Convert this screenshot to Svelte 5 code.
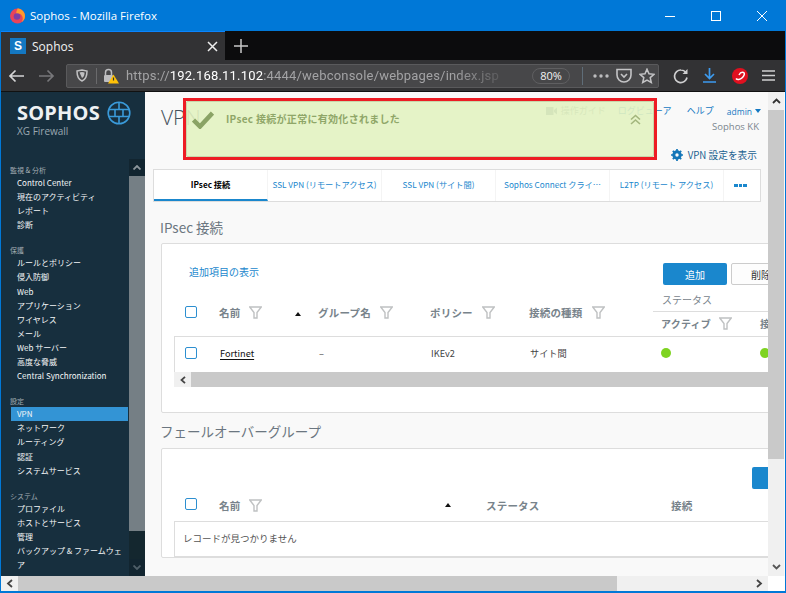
<script>
  const menu = [
    { label: '監視 & 分析', items: ['Control Center', '現在のアクティビティ', 'レポート', '診断'] },
    { label: '保護', items: ['ルールとポリシー', '侵入防御', 'Web', 'アプリケーション', 'ワイヤレス', 'メール', 'Web サーバー', '高度な脅威', 'Central Synchronization'] },
    { label: '設定', items: ['VPN', 'ネットワーク', 'ルーティング', '認証', 'システムサービス'] },
    { label: 'システム', items: ['プロファイル', 'ホストとサービス', '管理', 'バックアップ & ファームウェア'] }
  ];
  const tabs = ['IPsec 接続', 'SSL VPN (リモートアクセス)', 'SSL VPN (サイト間)', 'Sophos Connect クライ…', 'L2TP (リモート アクセス)'];
</script>

{#snippet funnel()}
  <svg class="funnel" width="13" height="13" viewBox="0 0 13 13"><path d="M.7 1h11.6L8 6.500V12H5V6.500z" fill="#fff" stroke="#bfc1c2" stroke-width="1.400"/></svg>
{/snippet}

<div class="window">
  <div class="titlebar">
    <svg class="fx" width="17" height="17" viewBox="0 0 17 17">
      <circle cx="8.500" cy="9" r="7.500" fill="#e8445a"/>
      <path d="M8.500 1.500c3 0 7.500 2.500 7.500 7.500 0 3-1.500 5-3.500 6 1.500-2 2-5-.5-7.500-1-1-3-1-4 0-1-.5-1-1.500-.5-2.500C7 4 8.500 3 8.500 1.500z" fill="#ff9a2e"/>
      <circle cx="8" cy="9.500" r="3.300" fill="#7b3fa8"/>
    </svg>
    <span class="wintitle">Sophos - Mozilla Firefox</span>
    <div class="winbtns">
      <svg width="12" height="12" viewBox="0 0 12 12"><path d="M1 6.500h10" stroke="#fff"/></svg>
      <svg width="12" height="12" viewBox="0 0 12 12"><rect x="1.500" y="1.500" width="9" height="9" fill="none" stroke="#fff"/></svg>
      <svg width="12" height="12" viewBox="0 0 12 12"><path d="M1 1l10 10M11 1L1 11" stroke="#fff"/></svg>
    </div>
  </div>

  <div class="tabbar">
    <div class="tab">
      <span class="favicon">S</span>
      <span class="tabname">Sophos</span>
      <svg width="11" height="11" viewBox="0 0 11 11"><path d="M1 1l9 9M10 1l-9 9" stroke="#eee" stroke-width="1.500"/></svg>
    </div>
    <svg class="newtab" width="14" height="14" viewBox="0 0 14 14"><path d="M7 0v14M0 7h14" stroke="#c8c8c8" stroke-width="1.500"/></svg>
  </div>

  <div class="navbar">
    <svg class="navarrow" width="17" height="14" viewBox="0 0 17 14"><path d="M16 7H2M7.500 1.500L2 7l5.500 5.500" fill="none" stroke="#d4d4d5" stroke-width="1.700"/></svg>
    <svg class="navarrow next" width="17" height="14" viewBox="0 0 17 14"><path d="M1 7h14M9.500 1.500L15 7l-5.500 5.500" fill="none" stroke="#77777a" stroke-width="1.700"/></svg>
    <div class="urlbar">
      <svg width="12" height="13" viewBox="0 0 12 13"><path d="M1 2l5-1 5 1c0 5-1 8.500-5 10C2 10.500 1 7 1 2z" fill="none" stroke="#c0c0c2" stroke-width="1.500"/><path d="M3.500 3.500L6 3l2.500.5C8.500 6 8 8 6 9z" fill="#c0c0c2"/></svg>
      <span class="urlsep"></span>
      <svg class="lock" width="15" height="16" viewBox="0 0 15 16"><path d="M1.500 7V4.500a3 3 0 016 0V7" fill="none" stroke="#bdbdbf" stroke-width="1.500"/><rect x="0" y="7" width="9" height="7" rx="1" fill="#bdbdbf"/><path d="M9.500 6.500L15 15.500H4z" fill="#ffc107"/><path d="M9.500 9.500v3" stroke="#333" stroke-width="1.200"/></svg>
      <span class="url">https://<b>192.168.11.102</b>:4444/webconsole/webpages/index.jsp</span>
      <span class="zoompill">80%</span>
      <span class="urlsep wide"></span>
      <svg width="16" height="4" viewBox="0 0 16 4"><g fill="#bcbcbe"><circle cx="2" cy="2" r="1.700"/><circle cx="8" cy="2" r="1.700"/><circle cx="14" cy="2" r="1.700"/></g></svg>
      <svg width="16" height="15" viewBox="0 0 16 15"><path d="M1 1.500h14V7a7 7 0 01-14 0z" fill="none" stroke="#c4c4c6" stroke-width="1.600"/><path d="M5 6l3 3 3-3" fill="none" stroke="#c4c4c6" stroke-width="1.600"/></svg>
      <svg width="16" height="16" viewBox="0 0 16 16"><path d="M8 1.200l2 4.600 5 .5-3.800 3.300 1.100 4.900L8 12l-4.300 2.500 1.100-4.900L1 6.300l5-.5z" fill="none" stroke="#c4c4c6" stroke-width="1.500"/></svg>
    </div>
    <div class="navicons">
      <svg width="16" height="16" viewBox="0 0 16 16"><path d="M14 9.500A6.300 6.300 0 118 2c2 0 3.500.8 5 2.500" fill="none" stroke="#cfcfd0" stroke-width="1.700"/><path d="M14.500 1v5h-5z" fill="#cfcfd0"/></svg>
      <svg width="13" height="15" viewBox="0 0 13 15"><path d="M6.500 0v10M2 6l4.500 4.500L11 6M0 14h13" fill="none" stroke="#3d9bef" stroke-width="1.700"/></svg>
      <svg width="16" height="16" viewBox="0 0 16 16"><circle cx="8" cy="8" r="8" fill="#e0101f"/><path d="M4 10.500C5 12 8 12 10.500 9.500 12.500 7.500 13 5 11.500 4.500 10 4 8 5 7 7" fill="none" stroke="#fff" stroke-width="1.500"/></svg>
      <svg width="13" height="11" viewBox="0 0 13 11"><path d="M0 1h13M0 5.500h13M0 10h13" stroke="#cfcfd0" stroke-width="1.600"/></svg>
    </div>
  </div>

  <div class="page">
    <aside class="sidebar">
      <div class="brand">
        <div class="brandtext">
          <div class="sophos">SOPHOS</div>
          <div class="xg">XG Firewall</div>
        </div>
        <svg width="24" height="24" viewBox="0 0 24 24"><g fill="none" stroke="#3a9ad9" stroke-width="1.600"><circle cx="12" cy="12" r="10.800"/><path d="M2 8.500h20M2 15.500h20M8 8.500v7M16 8.500v7M12 1.500v7M12 15.500v7"/></g></svg>
      </div>
      <div class="menuwrap">
        <nav class="menu">
          {#each menu as group}
            <div class="grouplabel">{group.label}</div>
            {#each group.items as item}
              <div class="menuitem" class:current={item === 'VPN'}>{item}</div>
            {/each}
          {/each}
        </nav>
        <div class="sidescroll">
          <div class="sidebtn"><svg width="8" height="5" viewBox="0 0 8 5"><path d="M.5 4.500L4 1l3.500 3.500" fill="none" stroke="#8d969c" stroke-width="1.800"/></svg></div>
          <div class="sidethumb"></div>
          <div class="sidebtn low"><svg width="8" height="5" viewBox="0 0 8 5"><path d="M.5.500L4 4 7.500.500" fill="none" stroke="#4f5f69" stroke-width="1.800"/></svg></div>
        </div>
      </div>
    </aside>

    <main class="content">
      <header class="head">
        <h1>VPN</h1>
        <div class="headright">
          <div class="links">
            <svg width="11" height="8" viewBox="0 0 11 8"><path d="M0 0h7.500v8H0zM8 3l3-2.500v7L8 5z" fill="#5d7587"/></svg>
            <span class="guide">操作ガイド</span>
            <span class="log">ログビューア</span>
            <span class="help">ヘルプ</span>
            <span class="admin">admin</span>
            <i class="caret"></i>
          </div>
          <div class="org">Sophos KK</div>
          <div class="settings">
            <svg width="12" height="12" viewBox="0 0 12 12"><circle cx="6" cy="6" r="3.500" fill="none" stroke="#1376b8" stroke-width="2.500"/><path d="M6 0v12M0 6h12M1.800 1.800l8.400 8.400M10.200 1.800l-8.400 8.400" stroke="#1376b8" stroke-width="1.700"/><circle cx="6" cy="6" r="1.700" fill="#f9f9f9"/></svg>
            VPN 設定を表示
          </div>
        </div>
      </header>

      <div class="tabs">
        {#each tabs as t, i}
          <div class="tabitem" class:active={i === 0}>{t}</div>
        {/each}
        <div class="tabitem more"><span></span><span></span><span></span></div>
      </div>

      <h2>IPsec 接続</h2>
      <section class="card first">
        <div class="toolbar">
          <span class="addlink">追加項目の表示</span>
          <div class="buttons">
            <button class="primary">追加</button>
            <button class="plain">削除</button>
          </div>
        </div>
        <div class="grid ipsec headrow">
          <span class="check"></span>
          <span class="th">名前 {@render funnel()}<i class="sort"></i></span>
          <span class="th">グループ名 {@render funnel()}</span>
          <span class="th">ポリシー {@render funnel()}</span>
          <span class="th">接続の種類 {@render funnel()}</span>
          <div class="statusgroup">
            <div class="statustitle">ステータス</div>
            <div class="statuscols">
              <span class="th">アクティブ {@render funnel()}</span>
              <span class="th">接続</span>
            </div>
          </div>
        </div>
        <div class="tablebody">
          <div class="grid ipsec row">
            <span class="check"></span>
            <span class="name">Fortinet</span>
            <span>–</span>
            <span>IKEv2</span>
            <span>サイト間</span>
            <div class="dots"><i></i><i></i></div>
          </div>
          <div class="tablescroll">
            <span class="leftbtn"><svg width="6" height="8" viewBox="0 0 6 8"><path d="M5 .8L1.500 4 5 7.200" fill="none" stroke="#444" stroke-width="1.800"/></svg></span>
            <span class="tablethumb"></span>
          </div>
        </div>
      </section>

      <h2 class="second">フェールオーバーグループ</h2>
      <section class="card">
        <div class="toolbar short"><button class="primary stub"></button></div>
        <div class="grid failover headrow low">
          <span class="check"></span>
          <span class="th">名前 {@render funnel()}</span>
          <span class="sortcell"><i class="sort"></i></span>
          <span class="th">ステータス</span>
          <span class="th">接続</span>
        </div>
        <div class="emptyrow">レコードが見つかりません</div>
      </section>
    </main>

    <div class="vscroll">
      <div class="vbtn"><svg width="9" height="6" viewBox="0 0 9 6"><path d="M1 5l3.500-3.500L8 5" fill="none" stroke="#333" stroke-width="1.800"/></svg></div>
      <div class="vthumb"></div>
      <div class="vtrack"></div>
      <div class="vbtn"><svg width="9" height="6" viewBox="0 0 9 6"><path d="M1 1l3.500 3.500L8 1" fill="none" stroke="#555" stroke-width="1.800"/></svg></div>
    </div>

    <div class="notice">
      <div class="noticeinner">
        <svg width="22" height="19" viewBox="0 0 22 19"><path d="M1.500 10l6.500 6.500L20.500 3" fill="none" stroke="#8aa365" stroke-width="4.500"/></svg>
        <span>IPsec 接続が正常に有効化されました</span>
        <svg class="chev" width="11" height="11" viewBox="0 0 11 11"><path d="M1 5.500L5.500 1.500 10 5.500M1 10L5.500 6 10 10" fill="none" stroke="#a3b67d" stroke-width="1.600"/></svg>
      </div>
    </div>
  </div>

  <div class="hscroll">
    <span class="hbtn"><svg width="7" height="9" viewBox="0 0 7 9"><path d="M6 1L2 4.500 6 8" fill="none" stroke="#444" stroke-width="1.800"/></svg></span>
    <span class="hthumb"></span>
    <span class="htrack"><svg width="7" height="9" viewBox="0 0 7 9"><path d="M1 1l4 3.500L1 8" fill="none" stroke="#444" stroke-width="1.800"/></svg></span>
    <span class="hcorner"></span>
  </div>
</div>

<style>
  :global(body) {
    margin: 0;
    background: #0078d7;
  }

  .window {
    width: 784px;
    height: 591px;
    border: solid #0078d7;
    border-width: 0 1px 2px;
    overflow: hidden;
    display: flex;
    flex-direction: column;
    font-family: "Noto Sans CJK JP", sans-serif;
    position: relative;
  }

  .titlebar {
    height: 31px;
    flex: none;
    background: #0078d7;
    display: flex;
    align-items: center;
    padding-left: 8px;
    color: #fff;
  }
  .wintitle {
    font: 11.500px "Open Sans", sans-serif;
    margin-left: 4px;
  }
  .winbtns {
    margin-left: auto;
    display: flex;
    gap: 34px;
    padding-right: 17px;
    align-items: center;
  }

  .tabbar {
    height: 29px;
    flex: none;
    background: #0c0c0d;
    display: flex;
    align-items: center;
  }
  .tab {
    height: 28px;
    border-top: 1px solid #0a84ff;
    background: #323234;
    display: flex;
    align-items: center;
    padding: 0 7px 0 9px;
    width: 208px;
  }
  .favicon {
    width: 16px;
    height: 16px;
    background: #1478c2;
    color: #fff;
    font: bold 12px/16px "Liberation Sans", sans-serif;
    text-align: center;
  }
  .tabname {
    font: 12px "Open Sans", sans-serif;
    color: #f2f2f2;
    margin-left: 6px;
    flex: 1;
  }
  .newtab {
    margin-left: 9px;
  }

  .navbar {
    height: 32px;
    flex: none;
    background: #323234;
    display: flex;
    align-items: center;
    padding-left: 7px;
    border-bottom: 1px solid #111;
    box-sizing: border-box;
  }
  .navarrow.next {
    margin-left: 13px;
  }
  .urlbar {
    width: 593px;
    height: 24px;
    margin-left: 11px;
    flex: none;
    box-sizing: border-box;
    background: #474749;
    border: 1px solid #5a5a5c;
    border-radius: 2px;
    display: flex;
    align-items: center;
    padding: 0 3px 0 9px;
    gap: 7px;
  }
  .urlsep {
    width: 1px;
    height: 16px;
    background: #6a6a6c;
    margin: 0 1px;
  }
  .urlsep.wide {
    background: #5f6d78;
    height: 18px;
    margin: 0 3px 0 5px;
  }
  .lock {
    margin-left: -1px;
  }
  .url {
    font: 13px Roboto, sans-serif;
    letter-spacing: .2px;
    color: #a3a3a5;
    flex: 1;
    width: 0;
    white-space: nowrap;
    overflow: hidden;
    mask-image: linear-gradient(to right, #000 82%, rgba(0, 0, 0, .25) 93%);
  }
  .url b {
    font-weight: 400;
    color: #fff;
  }
  .zoompill {
    width: 38px;
    height: 16px;
    border: 1px solid #5f5f61;
    border-radius: 9px;
    box-sizing: border-box;
    color: #f2f2f2;
    font: 11px/14px "Open Sans", sans-serif;
    text-align: center;
  }
  .navicons {
    flex: 1;
    display: flex;
    align-items: center;
    gap: 14px;
    padding-left: 14px;
  }
  .navicons svg:nth-child(3) {
    margin-left: 2px;
  }

  .page {
    flex: 1;
    min-height: 0;
    display: flex;
    position: relative;
    background: #f9f9f9;
  }

  .sidebar {
    width: 144px;
    flex: none;
    background: #172f3e;
    display: flex;
    flex-direction: column;
    color: #fff;
  }
  .brand {
    display: flex;
    height: 67px;
    box-sizing: border-box;
    padding: 9px 0 0 16px;
    gap: 7px;
  }
  .sophos {
    font: 700 20px/24px "Open Sans", sans-serif;
    letter-spacing: .2px;
    color: #eef1f3;
    width: 83px;
  }
  .xg {
    font: 10px/11px "Open Sans", sans-serif;
    color: #9aa8b1;
    margin-top: 1px;
  }
  .menuwrap {
    flex: 1;
    min-height: 0;
    display: flex;
  }
  .menu {
    width: 128px;
    flex: none;
    overflow: hidden;
    font-size: 8px;
    line-height: 14.100px;
    padding-top: 5px;
    box-sizing: border-box;
    height: 416px;
  }
  .grouplabel {
    padding-left: 9px;
    color: #a3adb3;
    font-size: 7px;
    line-height: 12px;
    height: 12px;
    margin-top: 12px;
  }
  .grouplabel:first-child {
    margin-top: 0;
  }
  .menuitem {
    padding: 0 3px 0 6px;
    margin-left: 10px;
    width: 108px;
    color: #f4f6f7;
    min-height: 14.100px;
  }
  .menuitem.current {
    background: #3394d5;
  }
  .sidescroll {
    width: 16px;
    display: flex;
    flex-direction: column;
    background: #14272f;
  }
  .sidebtn {
    height: 17px;
    background: #122530;
    display: flex;
    align-items: center;
    justify-content: center;
    flex: none;
  }
  .sidebtn.low {
    margin-top: auto;
  }
  .sidethumb {
    height: 355px;
    background: #757f85;
  }

  .content {
    width: 623px;
    flex: none;
    overflow: hidden;
    box-sizing: border-box;
    font-size: 9.200px;
    color: #444;
  }
  .head {
    height: 77px;
    display: flex;
    justify-content: space-between;
  }
  h1 {
    margin: 12px 0 0 16px;
    font: 300 21px/26px "Open Sans", sans-serif;
    color: #46525c;
  }
  .headright {
    width: 220px;
    display: flex;
    flex-direction: column;
    align-items: flex-end;
    padding-right: 7px;
    box-sizing: border-box;
  }
  .links {
    margin-top: 12px;
    display: flex;
    align-items: center;
    color: #1478c2;
    font-size: 9px;
    line-height: 14px;
    white-space: nowrap;
  }
  .guide {
    color: #6d7d88;
    margin: 0 0 0 4px;
    width: 57px;
  }
  .log {
    width: 69px;
  }
  .help {
    width: 40px;
  }
  .admin {
    font: 8.500px "Open Sans", sans-serif;
  }
  .caret {
    margin-left: 3px;
    border: 3.500px solid transparent;
    border-top: 4px solid #1478c2;
    border-bottom: 0;
  }
  .org {
    color: #7b868e;
    font: 9.500px/14px "Open Sans", sans-serif;
    margin: 2px 0 0;
    padding-right: 2px;
  }
  .settings {
    margin-top: 14px;
    display: flex;
    align-items: center;
    gap: 5px;
    color: #1a5f8f;
    font-size: 9.700px;
    line-height: 14px;
    padding-right: 4px;
  }

  .tabs {
    margin-left: 8px;
    width: 608px;
    height: 33px;
    box-sizing: border-box;
    background: #fff;
    border: 1px solid #ddd;
    display: flex;
  }
  .tabitem {
    width: 114px;
    flex: none;
    box-sizing: border-box;
    text-align: center;
    font-size: 8.200px;
    line-height: 28px;
    color: #1a87cd;
    border-right: 1px solid #f4f4f4;
    white-space: nowrap;
  }
  .tabitem.active {
    color: #000;
    font-weight: 700;
    border-bottom: 2px solid #1a87cd;
    height: 31px;
  }
  .tabitem.more {
    width: 33px;
    border: 0;
    display: flex;
    align-items: center;
    justify-content: center;
    gap: 1px;
  }
  .more span {
    width: 3.500px;
    height: 3px;
    background: #1a87cd;
  }

  h2 {
    margin: 15px 0 6px 15px;
    font: 400 13.500px/20px "Noto Sans CJK JP", sans-serif;
    color: #6b7680;
    height: 20px;
  }
  h2.second {
    margin: 8px 0 7px 15px;
  }

  .card {
    margin-left: 16px;
    width: 640px;
    box-sizing: border-box;
    background: #fff;
    border: 1px solid #ddd;
    border-radius: 2px;
    padding-left: 12px;
  }
  .card.first {
    height: 170px;
  }
  .toolbar {
    height: 45px;
    position: relative;
    display: flex;
    align-items: flex-end;
  }
  .addlink {
    margin-left: 15px;
    color: #1a87cd;
    font-size: 10px;
    line-height: 14px;
    position: relative;
    top: -10px;
  }
  .buttons {
    margin-left: 404px;
    display: flex;
    gap: 4px;
    flex: none;
    padding-bottom: 4px;
  }
  button {
    height: 22px;
    padding: 0;
    border-radius: 2px;
    font: 10px "Noto Sans CJK JP", sans-serif;
  }
  .primary {
    width: 64px;
    background: #1a87cd;
    border: 0;
    color: #fff;
  }
  .plain {
    width: 60px;
    background: #fdfdfd;
    border: 1px solid #ccc;
    color: #333;
  }
  .toolbar.short {
    height: 40px;
    align-items: flex-end;
  }
  .stub {
    margin-left: 578px;
  }

  .grid {
    display: grid;
    align-items: center;
    white-space: nowrap;
  }
  .ipsec {
    grid-template-columns: 45px 99px 112px 99px 124px 115px;
  }
  .failover {
    grid-template-columns: 45px 226px 41px 185px 120px;
  }
  .headrow {
    height: 47px;
  }
  .headrow.low {
    height: 32px;
  }
  .check {
    width: 12px;
    height: 12px;
    margin: -2px 0 0 11px;
    box-sizing: border-box;
    border: 1.500px solid #2d8fd0;
    border-radius: 2px;
    background: #fff;
  }
  .th {
    color: #78838b;
    font-size: 10.500px;
    font-weight: 700;
    letter-spacing: .2px;
    display: flex;
    align-items: center;
    gap: 9px;
    position: relative;
  }
  .statuscols .th {
    font-size: 10px;
    gap: 8px;
  }
  .funnel {
    flex: none;
  }
  .sort {
    position: absolute;
    left: 76px;
    top: 7px;
    border: 3.500px solid transparent;
    border-bottom: 4px solid #111;
    border-top: 0;
  }
  .sortcell {
    display: flex;
  }
  .sortcell .sort {
    position: static;
  }
  .statusgroup {
    margin-top: -2px;
  }
  .statustitle {
    color: #78838b;
    font-size: 10px;
    line-height: 22px;
    padding-left: 9px;
    border-bottom: 1px solid #ddd;
  }
  .statuscols {
    display: grid;
    grid-template-columns: 99px 30px;
    padding-left: 8px;
    height: 23px;
    align-items: center;
  }
  .tablebody {
    border: solid #ddd;
    border-width: 1px 0 0 1px;
  }
  .row {
    height: 35px;
    box-sizing: border-box;
    padding-bottom: 4px;
  }
  .row .check {
    margin: 0 0 0 10px;
  }
  .name {
    color: #111;
    text-decoration: underline;
    text-underline-offset: 2px;
  }
  .dots {
    display: grid;
    grid-template-columns: 99px 30px;
    padding-left: 7px;
  }
  .dots i {
    width: 10px;
    height: 10px;
    border-radius: 50%;
    background: #7ed321;
  }
  .tablescroll {
    display: flex;
    height: 15px;
    margin-left: -1px;
    background: #f0f0f0;
  }
  .leftbtn {
    width: 17px;
    display: flex;
    align-items: center;
    justify-content: center;
  }
  .tablethumb {
    flex: 1;
    background: #c9c9c9;
  }

  .emptyrow {
    border: 1px solid #ddd;
    border-right: 0;
    height: 36px;
    box-sizing: border-box;
    padding-left: 8px;
    font-size: 9.500px;
    line-height: 33px;
    color: #555;
  }

  .vscroll {
    width: 16px;
    flex: none;
    background: #f0f0f0;
    display: flex;
    flex-direction: column;
    height: 484px;
  }
  .vbtn {
    height: 18px;
    flex: none;
    display: flex;
    align-items: center;
    justify-content: center;
  }
  .vthumb {
    height: 349px;
    background: #c9c9c9;
    flex: none;
  }
  .vtrack {
    flex: 1;
  }

  .notice {
    position: absolute;
    left: 182px;
    top: 6px;
    width: 474px;
    height: 62px;
    box-sizing: border-box;
    border: 3px solid #ed1c24;
  }
  .noticeinner {
    height: 100%;
    box-sizing: border-box;
    background: rgba(226, 242, 193, .9);
    border-radius: 2px;
    box-shadow: inset 0 0 0 1px #c9d6ab;
    display: flex;
    align-items: flex-start;
    padding: 9px 13px 0 6px;
    color: #8fa668;
    font-size: 10px;
    font-weight: 700;
    letter-spacing: .3px;
  }
  .noticeinner span {
    margin-left: 12px;
    line-height: 18px;
    flex: 1;
  }
  .chev {
    margin-top: 4px;
  }

  .hscroll {
    height: 15px;
    flex: none;
    display: flex;
    background: #f0f0f0;
  }
  .hbtn {
    width: 17px;
    display: flex;
    align-items: center;
    justify-content: center;
  }
  .hthumb {
    width: 599px;
    background: #c9c9c9;
  }
  .htrack {
    width: 151px;
    display: flex;
    align-items: center;
    justify-content: flex-end;
    padding-right: 5px;
    box-sizing: border-box;
  }
  .hcorner {
    flex: 1;
    background: #fff;
  }
</style>
